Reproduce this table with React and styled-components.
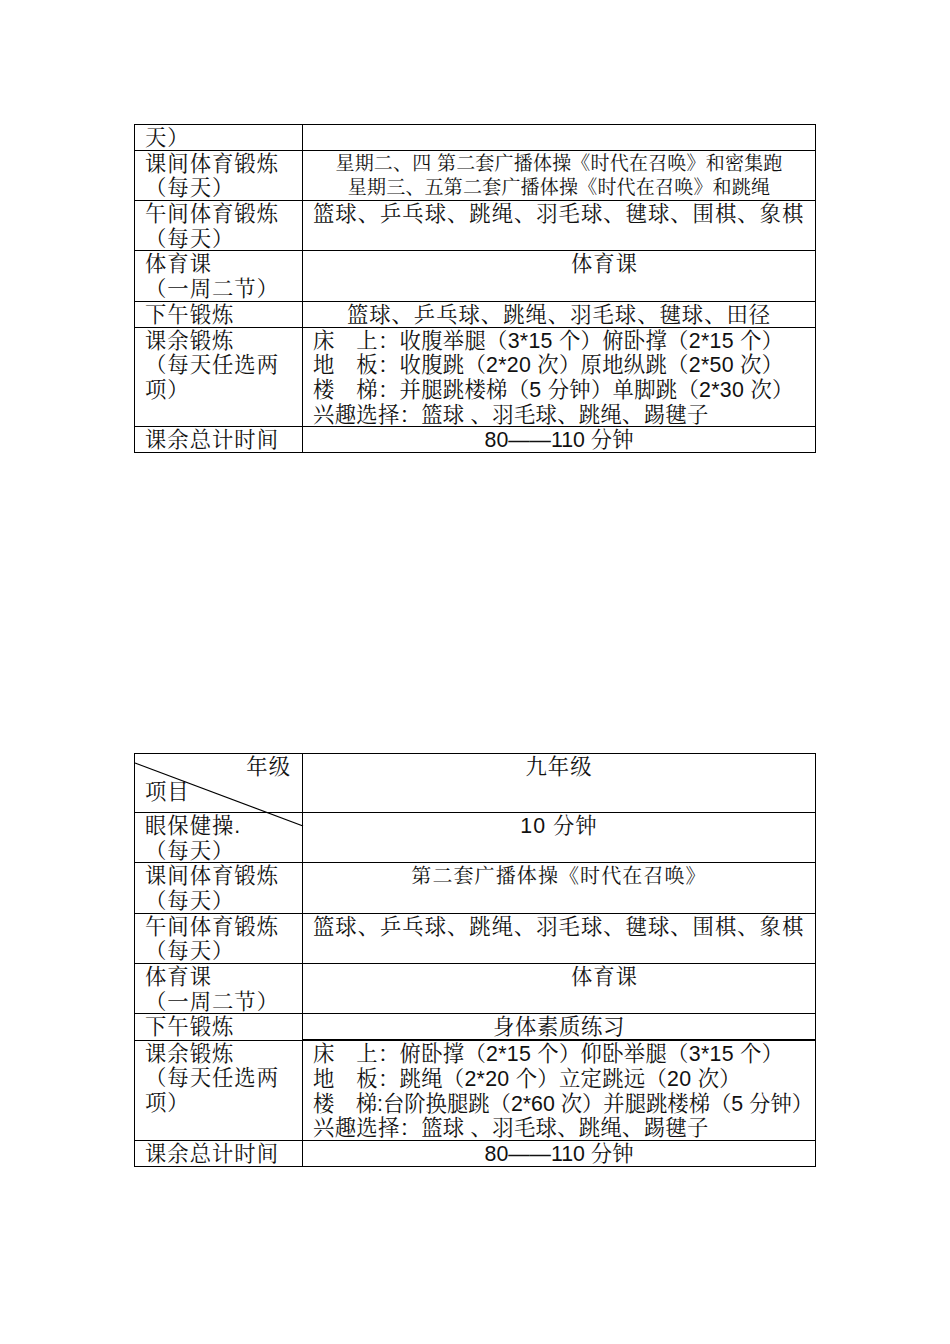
import React from "react";
import styled, { createGlobalStyle } from "styled-components";

const GlobalStyle = createGlobalStyle`
  html, body { margin: 0; padding: 0; background: #ffffff; }
  body {
    font-family: "Liberation Sans", "Noto Serif CJK SC", "Noto Sans CJK SC", sans-serif;
    color: #111111;
  }
`;

const Page = styled.div`
  box-sizing: border-box;
  min-height: 1344px;
  padding: 124px 0 0 134px;
  display: flex;
  flex-direction: column;
  gap: 300px;
`;

const Table = styled.table`
  border-collapse: collapse;
  table-layout: fixed;
  width: 681px;
  font-size: 21.33px;
  line-height: 24.7px;
`;

const LabelCol = styled.col`
  width: 168px;
`;

const ContentCol = styled.col`
  width: 513px;
`;

const Label = styled.td`
  border: 1px solid #000;
  padding: 0 0 0 10px;
  vertical-align: top;
  letter-spacing: 1px;
  white-space: nowrap;
`;

const Corner = styled(Label)`
  position: relative;
  height: 58px;
  padding-right: 11px;
`;

const CornerTop = styled.div`
  box-sizing: border-box;
  text-align: right;
  height: 24.7px;
  padding-top: 1px;
`;

const CornerBottom = styled.div`
  box-sizing: border-box;
  text-align: left;
  height: 24.7px;
  padding-top: 1px;
`;

const Diagonal = styled.svg`
  position: absolute;
  left: 0;
  top: 0;
  overflow: visible;
  pointer-events: none;
`;

const Content = styled.td`
  border: 1px solid #000;
  border-bottom-width: ${(p) => (p.$thick ? "2px" : "1px")};
  padding: 0 ${(p) => (p.$align === "center" ? 10 : 0)}px 0 ${(p) => p.$indent ?? 10}px;
  vertical-align: top;
  text-align: ${(p) => p.$align || "left"};
  font-size: ${(p) => p.$size || "inherit"};
  letter-spacing: ${(p) => p.$spacing ?? 0}px;
  white-space: nowrap;
`;

const Line = styled.div`
  box-sizing: border-box;
  height: 24.7px;
  line-height: 24.7px;
  padding-top: 1px;
  letter-spacing: ${(p) => (p.$tight ? "0px" : "inherit")};
`;

function Lines({ items }) {
  return items.map((t, i) => (
    <Line key={i} $tight={t.tight}>
      {typeof t === "string" ? t : t.text}
    </Line>
  ));
}

const table1 = [
  { label: ["天）"], content: [] },
  {
    label: ["课间体育锻炼", "（每天）"],
    content: ["星期二、四 第二套广播体操《时代在召唤》和密集跑", "星期三、五第二套广播体操《时代在召唤》和跳绳"],
    align: "center",
    size: "19px",
    spacing: 0.2,
  },
  {
    label: ["午间体育锻炼", "（每天）"],
    content: ["篮球、乒乓球、跳绳、羽毛球、毽球、围棋、象棋"],
    spacing: 1,
  },
  {
    label: ["体育课", "（一周二节）"],
    content: ["体育课"],
    align: "center",
    indent: 101,
    spacing: 1,
  },
  {
    label: ["下午锻炼"],
    content: ["篮球、乒乓球、跳绳、羽毛球、毽球、田径"],
    align: "center",
    spacing: 1,
  },
  {
    label: ["课余锻炼", "（每天任选两", "项）"],
    content: [
      "床　上：收腹举腿（3*15 个）俯卧撑（2*15 个）",
      "地　板：收腹跳（2*20 次）原地纵跳（2*50 次）",
      "楼　梯：并腿跳楼梯（5 分钟）单脚跳（2*30 次）",
      "兴趣选择：篮球 、羽毛球、跳绳、踢毽子",
    ],
    spacing: 0.3,
  },
  {
    label: ["课余总计时间"],
    content: ["80——110 分钟"],
    align: "center",
  },
];

const table2 = [
  {
    label: ["眼保健操.", "（每天）"],
    content: ["10 分钟"],
    align: "center",
    spacing: 1,
  },
  {
    label: ["课间体育锻炼", "（每天）"],
    content: ["第二套广播体操《时代在召唤》"],
    align: "center",
    size: "20px",
    spacing: 1.1,
  },
  {
    label: ["午间体育锻炼", "（每天）"],
    content: ["篮球、乒乓球、跳绳、羽毛球、毽球、围棋、象棋"],
    spacing: 1,
  },
  {
    label: ["体育课", "（一周二节）"],
    content: ["体育课"],
    align: "center",
    indent: 101,
    spacing: 1,
  },
  {
    label: ["下午锻炼"],
    content: ["身体素质练习"],
    align: "center",
    spacing: 0.7,
    thick: true,
  },
  {
    label: ["课余锻炼", "（每天任选两", "项）"],
    content: [
      "床　上：俯卧撑（2*15 个）仰卧举腿（3*15 个）",
      "地　板：跳绳（2*20 个）立定跳远（20 次）",
      { text: "楼　梯:台阶换腿跳（2*60 次）并腿跳楼梯（5 分钟）", tight: true },
      "兴趣选择：篮球 、羽毛球、跳绳、踢毽子",
    ],
    spacing: 0.3,
  },
  {
    label: ["课余总计时间"],
    content: ["80——110 分钟"],
    align: "center",
  },
];

function Rows({ rows }) {
  return rows.map((r, i) => (
    <tr key={i}>
      <Label>
        <Lines items={r.label} />
      </Label>
      <Content
        $align={r.align}
        $size={r.size}
        $spacing={r.spacing}
        $indent={r.indent}
        $thick={r.thick}
      >
        <Lines items={r.content} />
      </Content>
    </tr>
  ));
}

export default function App() {
  return (
    <>
      <GlobalStyle />
      <Page>
        <Table>
          <colgroup>
            <LabelCol />
            <ContentCol />
          </colgroup>
          <tbody>
            <Rows rows={table1} />
          </tbody>
        </Table>
        <Table>
          <colgroup>
            <LabelCol />
            <ContentCol />
          </colgroup>
          <tbody>
            <tr>
              <Corner>
                <Diagonal width="168" height="72" viewBox="0 0 168 72">
                  <line x1="0" y1="9" x2="168" y2="72" stroke="#000" strokeWidth="1.3" />
                </Diagonal>
                <CornerTop>年级</CornerTop>
                <CornerBottom>项目</CornerBottom>
              </Corner>
              <Content $align="center" $spacing={1}>
                <Line>九年级</Line>
              </Content>
            </tr>
            <Rows rows={table2} />
          </tbody>
        </Table>
      </Page>
    </>
  );
}
